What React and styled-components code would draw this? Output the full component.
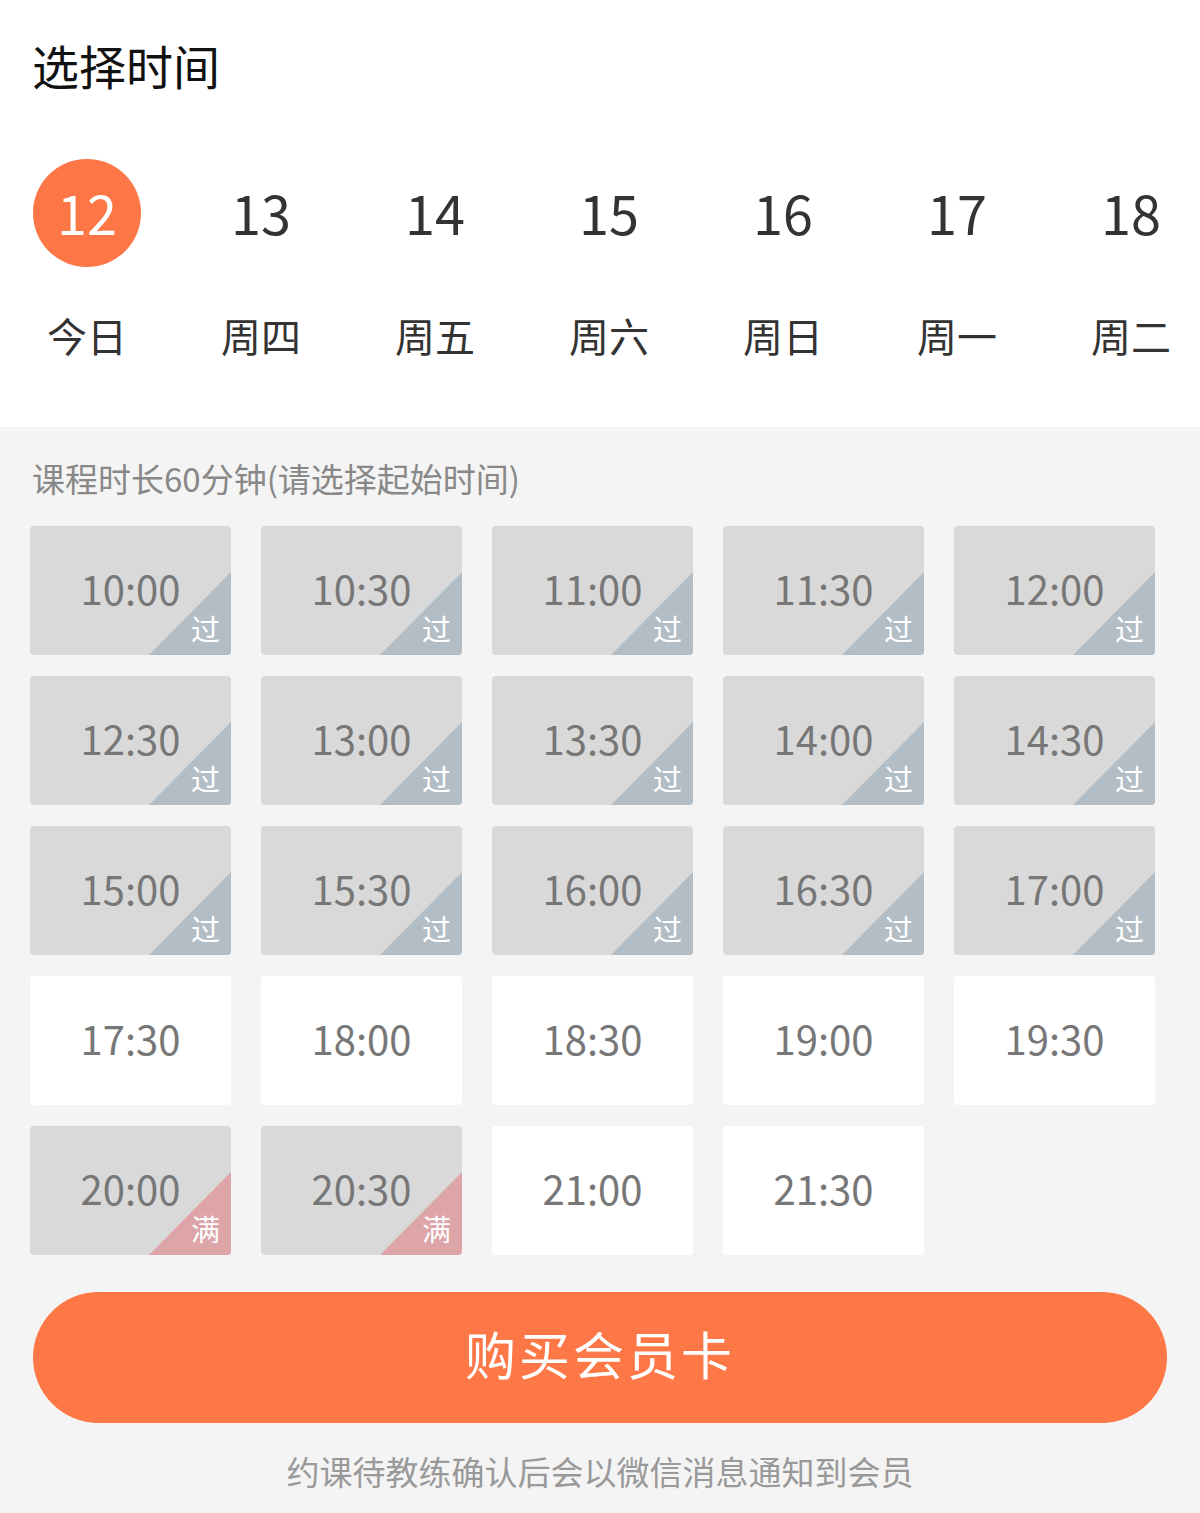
import styled, { createGlobalStyle } from "styled-components"

const GlobalStyle = createGlobalStyle`
  html, body {
    margin: 0;
    padding: 0;
    background: #f4f4f4;
    font-family: "Noto Sans CJK SC", "Noto Sans", sans-serif;
  }
`

const Page = styled.div`
  width: 1200px;
  min-height: 1513px;
  background: #f4f4f4;
  overflow: hidden;
`

const Header = styled.div`
  background: #fff;
  height: 427px;
  overflow: hidden;
`

const Title = styled.h1`
  margin: 0;
  padding: 34px 0 0 32px;
  font-size: 47px;
  font-weight: 400;
  line-height: 62px;
  color: #111;
`

const DateRow = styled.div`
  display: flex;
  width: 1218px;
  margin-top: 63px;
`

const DateCol = styled.div`
  flex: 0 0 174px;
  display: flex;
  flex-direction: column;
  align-items: center;
`

const Day = styled.div`
  width: 108px;
  height: 108px;
  border-radius: 50%;
  display: flex;
  align-items: center;
  justify-content: center;
  font-size: 54px;
  line-height: 1;
  color: ${(p) => (p.active ? "#fff" : "#333")};
  background: ${(p) => (p.active ? "#fd7646" : "transparent")};
  padding-bottom: 2px;
  box-sizing: border-box;
`

const Week = styled.div`
  margin-top: 44px;
  font-size: 40px;
  line-height: 48px;
  color: #333;
`

const Body = styled.div`
  padding: 0 30px;
`

const Hint = styled.div`
  padding: 30px 0 0 2px;
  font-size: 33px;
  line-height: 42px;
  color: #888;
`

const Grid = styled.div`
  display: grid;
  grid-template-columns: repeat(5, 201px);
  column-gap: 30px;
  row-gap: 21px;
  margin-top: 27px;
`

const Slot = styled.div`
  position: relative;
  height: 129px;
  border-radius: 4px;
  overflow: hidden;
  background: ${(p) => (p.state === "open" ? "#fff" : "#d9d9d9")};
  display: flex;
  align-items: center;
  justify-content: center;
  padding-bottom: 6px;
  box-sizing: border-box;
`

const Time = styled.span`
  position: relative;
  z-index: 1;
  font-size: 40px;
  color: #777;
  line-height: 1;
`

const Corner = styled.div`
  position: absolute;
  right: 0;
  bottom: 0;
  width: 82px;
  height: 83px;
  background: ${(p) => (p.state === "full" ? "#dda5a8" : "#b3bdc5")};
  clip-path: polygon(100% 0, 100% 100%, 0 100%);
`

const Tag = styled.span`
  position: absolute;
  right: 11px;
  bottom: 12px;
  font-size: 29px;
  line-height: 1;
  color: #fff;
`

const BuyButton = styled.button`
  display: flex;
  align-items: center;
  justify-content: center;
  width: 1134px;
  height: 131px;
  margin: 37px 0 0 3px;
  padding: 0 0 10px;
  border: none;
  border-radius: 66px;
  background: #fe7847;
  color: #fff;
  font-family: inherit;
  font-size: 51px;
  letter-spacing: 3px;
  cursor: pointer;
`

const Notice = styled.div`
  text-align: center;
  margin-top: 26px;
  font-size: 33px;
  line-height: 44px;
  color: #999;
`

const days = [
  ["12", "今日"],
  ["13", "周四"],
  ["14", "周五"],
  ["15", "周六"],
  ["16", "周日"],
  ["17", "周一"],
  ["18", "周二"],
]

const slots = [
  ["10:00", "past"], ["10:30", "past"], ["11:00", "past"], ["11:30", "past"], ["12:00", "past"],
  ["12:30", "past"], ["13:00", "past"], ["13:30", "past"], ["14:00", "past"], ["14:30", "past"],
  ["15:00", "past"], ["15:30", "past"], ["16:00", "past"], ["16:30", "past"], ["17:00", "past"],
  ["17:30", "open"], ["18:00", "open"], ["18:30", "open"], ["19:00", "open"], ["19:30", "open"],
  ["20:00", "full"], ["20:30", "full"], ["21:00", "open"], ["21:30", "open"],
]

const App = () => {
  return (
    <Page>
      <GlobalStyle />
      <Header>
        <Title>选择时间</Title>
        <DateRow>
          {days.map(([d, w], i) => (
            <DateCol key={d}>
              <Day active={i === 0}>{d}</Day>
              <Week>{w}</Week>
            </DateCol>
          ))}
        </DateRow>
      </Header>
      <Body>
        <Hint>课程时长60分钟(请选择起始时间)</Hint>
        <Grid>
          {slots.map(([t, s]) => (
            <Slot key={t} state={s}>
              <Time>{t}</Time>
              {s !== "open" && (
                <>
                  <Corner state={s} />
                  <Tag>{s === "full" ? "满" : "过"}</Tag>
                </>
              )}
            </Slot>
          ))}
        </Grid>
        <BuyButton>购买会员卡</BuyButton>
        <Notice>约课待教练确认后会以微信消息通知到会员</Notice>
      </Body>
    </Page>
  )
}

export default App
